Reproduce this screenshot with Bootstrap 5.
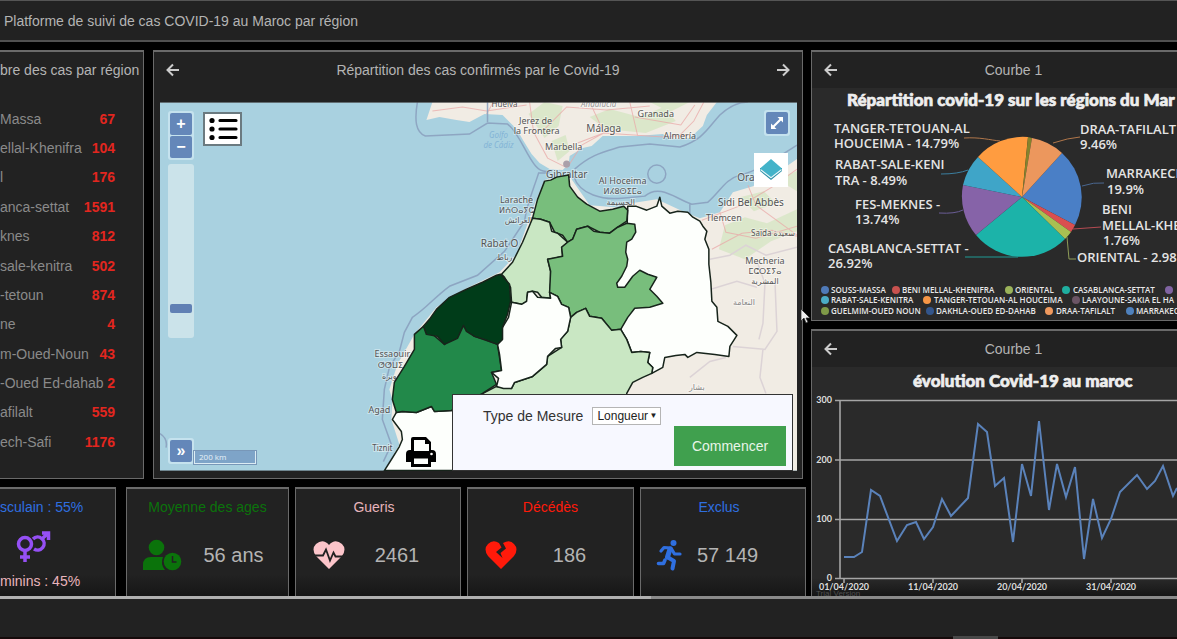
<!DOCTYPE html>
<html lang="fr">
<head>
<meta charset="utf-8">
<meta name="viewport" content="width=device-width, initial-scale=1">
<title>Platforme de suivi de cas COVID-19 au Maroc</title>
<link href="https://cdn.jsdelivr.net/npm/bootstrap@5.3.0/dist/css/bootstrap.min.css" rel="stylesheet">
<style>
  body{background:#000;color:#b4b4b4;font-family:"Liberation Sans",Arial,sans-serif;font-size:14px;line-height:20px;overflow:hidden}
  .topbar{background:#222;border-top:1px solid #555;border-bottom:2px solid #505050;height:42px}
  .board{display:grid;grid-template-columns:806fr 366fr;column-gap:5px}
  .board-top{display:grid;grid-template-columns:144fr 650fr;column-gap:9px;padding-right:3px}
  .stats{display:grid;grid-template-columns:120fr 163fr 166fr 167fr 166fr;column-gap:6px}
  .panel{background:#222;border:1px solid #6a6a6a;border-top-width:2px;min-width:0}
  .panel.edge-l{border-left:0}
  .panel.edge-r{border-right:0}
  .panel-head{height:36px}
  .tall-head{height:50px;padding-bottom:14px}
  .arrow{background:none;border:0;padding:0;width:14px;height:14px;line-height:0;color:#ccc}
  .region-list{padding:16px 28px 21px 0}
  .region-list li{flex:1;color:#8a8a8a}
  .region-list strong{color:#e3261f}
  .map-wrap{padding:0 5px 7px 6px}
  .map-wrap svg.carte,.plot{display:block;width:100%;height:auto}
  .ctl{width:22px;height:22px;background:#6487b9;color:#fff;border:0;border-radius:2px;padding:0;font-weight:700;line-height:20px;font-size:16px;display:flex;align-items:center;justify-content:center}
  .halo{background:rgba(220,240,250,.55);padding:2px;border-radius:3px}
  .zoom-pair{row-gap:1px}
  .ctl-left{left:8px;top:9px}
  .legend-btn{left:43px;top:10px;width:39px;height:34px;background:#fff;border:2px solid #6b7a80;padding:0;line-height:0}
  .zoom-track{width:26px;height:174px;background:rgba(225,238,240,.62);border-radius:3px;position:relative}
  .zoom-track input{appearance:none;-webkit-appearance:none;background:none;width:174px;height:26px;margin:0;position:absolute;left:-74px;top:74px;transform:rotate(-90deg)}
  .zoom-track input::-webkit-slider-thumb{-webkit-appearance:none;width:9px;height:22px;background:#6080b4;border-radius:2px}
  .ctl-low{left:8px;bottom:7px}
  .scale-bar{background:#7ea4c8;border:1px solid #dcecf4;border-top:0;outline:1px solid #7897b8;color:#e6f2f8;font:8px/12px "Open Sans",sans-serif;width:62px;height:13px;padding-left:4px}
  .ctl-full{right:7px;top:8px}
  .ctl-layers{right:9px;top:51px;width:34px;height:34px;background:#fff;border:0;padding:0;line-height:0}
  .measure{right:4px;bottom:0;width:341px;height:77px;background:#f7f8ff;border:1px solid #333;color:#333;padding:0 6px 4px 30px}
  .measure-row{padding-top:11px;gap:9px}
  .measure select{font-size:12px;line-height:14px;height:18px;width:69px;border:1px solid #b5b5b5;background:#fff;color:#222;padding:0 4px;appearance:none;-webkit-appearance:none}
  .caret{right:4px;top:0;font-size:8px;line-height:18px;pointer-events:none;color:#222}
  .go{width:112px;height:41px;background:#40a04e;color:#e8f5e8;border:0}
  .printer{left:245px;bottom:3px;width:32px;height:32px;background:none;border:0;padding:0;line-height:0}
  .stat{height:109px;background:linear-gradient(#222 0 80%,#161616);border-bottom:0;padding-top:8px}
  .stat-row{margin-top:16px}
  .stat .ico{width:66px;text-align:center;line-height:0}
  .stat .ico.slim{width:56px}
  .stat .val{font-size:20px;line-height:36px;padding-right:28px}
  .stat .val.wide{padding-right:14px}
  .pair{padding:12px 0 4px 16px}
  .c-blue{color:#2f6fe0}.c-pink{color:#e8b4bc}.c-green{color:#0b730b}.c-red{color:#ff1a0a}
  .player{background:#222;border-top:3px solid #8a8a8a;flex:1;border-bottom:2px solid #150a0a;position:relative;z-index:2;min-height:43px}
  .progress-done{position:absolute;left:0;top:-3px;height:3px;width:55.3%;background:#b0b0b0}
  .grip{position:absolute;left:81%;bottom:-2px;width:45px;height:3px;background:#484848}
  .pointer{left:68%;top:266px;z-index:5}
  .plot{background:#2a2a2a}
  .ttl{font:900 17px Lato,"Liberation Sans",sans-serif;fill:#eee;stroke:#eee;stroke-width:.7px}
  .lbl{font:600 13px "Open Sans",sans-serif;fill:#e4e4e4}
  .leg{font:600 8px "Open Sans",sans-serif;fill:#e8e8e8}
  .ax{font:bold 9px Lato,"Liberation Sans",sans-serif;fill:#ddd}
  .town{font-family:"Noto Sans","DejaVu Sans",sans-serif;fill:#555;paint-order:stroke;stroke:#fff;stroke-opacity:.4;stroke-width:2px}
</style>
</head>
<body class="d-flex flex-column min-vh-100">
<header class="topbar d-flex align-items-center px-1"><span>Platforme de suivi de cas COVID-19 au Maroc par région</span></header>

<main class="board pt-2 position-relative">
  <div class="d-flex flex-column gap-2">
    <div class="board-top">
      <section class="panel edge-l d-flex flex-column">
        <div class="panel-head d-flex align-items-center text-nowrap">bre des cas par région</div>
        <ul class="region-list list-unstyled d-flex flex-column flex-grow-1 mb-0 text-nowrap">
          <li class="d-flex justify-content-between align-items-center"><span>Massa</span><strong>67</strong></li>
          <li class="d-flex justify-content-between align-items-center"><span>ellal-Khenifra</span><strong>104</strong></li>
          <li class="d-flex justify-content-between align-items-center"><span>l</span><strong>176</strong></li>
          <li class="d-flex justify-content-between align-items-center"><span>anca-settat</span><strong>1591</strong></li>
          <li class="d-flex justify-content-between align-items-center"><span>knes</span><strong>812</strong></li>
          <li class="d-flex justify-content-between align-items-center"><span>sale-kenitra</span><strong>502</strong></li>
          <li class="d-flex justify-content-between align-items-center"><span>-tetoun</span><strong>874</strong></li>
          <li class="d-flex justify-content-between align-items-center"><span>ne</span><strong>4</strong></li>
          <li class="d-flex justify-content-between align-items-center"><span>m-Oued-Noun</span><strong>43</strong></li>
          <li class="d-flex justify-content-between align-items-center"><span>-Oued Ed-dahab</span><strong>2</strong></li>
          <li class="d-flex justify-content-between align-items-center"><span>afilalt</span><strong>559</strong></li>
          <li class="d-flex justify-content-between align-items-center"><span>ech-Safi</span><strong>1176</strong></li>
        </ul>
      </section>

      <section class="panel">
        <div class="panel-head tall-head d-flex align-items-center justify-content-between px-2 mx-1">
          <button class="arrow" aria-label="Précédent"><svg width="14" height="14" viewBox="0 0 14 14" fill="none" stroke="currentColor" stroke-width="2"><path d="M13 7H2M7 1.500L1.500 7 7 12.500"/></svg></button>
          <span>Répartition des cas confirmés par le Covid-19</span>
          <button class="arrow" aria-label="Suivant"><svg width="14" height="14" viewBox="0 0 14 14" fill="none" stroke="currentColor" stroke-width="2"><path d="M1 7H12M7 1.500L12.500 7 7 12.500"/></svg></button>
        </div>
        <div class="map-wrap">
          <div class="position-relative overflow-hidden">
            <svg class="carte" viewBox="161 103 636 368" role="img" aria-label="Carte du Maroc">
              <rect x="161" y="103" width="636" height="368" fill="#a9d1e0"/>
              <g fill="#f1ece4">
                <path d="M433 103L427 121 440 118 457 121 470 123 485 115 503 116 517 130 524 142 532 155 540 164 550 170 563 171 569 165 570 157 583 149 592 147 603 137 637 137 663 135 672 140 690 139 703 127 707 116 717 103Z"/>
                <path d="M625 205L657 200 685 213 700 219 720 213 733 193 753 187 770 177 787 167 797 160V471H600V380L640 300Z"/>
                <path d="M393 400L390 390 398 365 415 335 437 308 467 289 500 273 517 255 535 205 545 181 569 176 590 206 628 209 640 212V471H385L400 445 392 420Z"/>
              </g>
              <g fill="#d3e5c0" opacity=".7">
                <path d="M545 103l18 4-4 20-14 12-16-24z M590 118l20-8 30 8 24-10 12 14-30 12-40-4z M552 142l14-6 4 16-12 10z M650 103l40 0-20 10z"/>
                <path d="M725 226l20-8 22 6 30-14v22l-26 10-26 18-26-10z M740 198l24-6 12 12-22 8z M777 180l20-8v20z"/>
              </g>
              <g fill="none" stroke="#eaa9a8" stroke-width="1" opacity=".75">
                <path d="M433 112l30-4 24 4 40-6M530 103l4 30 14 26 20 10M568 168l14-22 22-12 60 4 26-2M590 103l14 30M604 134l-26 10M630 103l8 34M680 136l14-14 10-19M635 118l46 8 14-20M494 103l-7 12M545 130l22-22 40 3 43-4"/>
                <path d="M702 221l40-15 30-18 25-18M748 186l8 20 41 30M720 213l6 20 30 6 41-12M712 250l30-16 30-3 25 6"/>
              </g>
              <g fill="none" stroke="#dcd3d6" stroke-width="1.500">
                <path d="M710 260l20-4 16-10 20 10 31-8M711 290l26-8 20 6M757 262l8 22-2 40-4 16M775 282l2 50-12 18-32-3M763 350l-3 28 6 16M690 378l20-16 16-4"/>
              </g>
              <g fill="none" stroke="#8ba1bf" stroke-width="1.500" opacity=".9">
                <path d="M418 103C415 121 416 133 426 137L470 135 488 124 508 125C519 133 526 155 536 167Q542 174 550 172M488 103v20M550 174l-11 0C534 190 527 205 525 222L505 252 478 276 450 287C436 297 427 309 413 318L405 333 400 352 390 368 385 390 383 420 392 445 384 462"/>
                <path d="M575 170C592 155 604 153 620 148L650 145 680 148C704 140 707 130 720 116Q734 103 748 103M574 177C580 196 604 201 622 199L645 197C660 184 676 200 692 205L708 203C720 193 725 180 740 176Q756 172 775 160L797 146M690 205v12"/>
                <circle cx="657" cy="175" r="9"/>
                <path d="M161 434q8 5 6 14M386 470q8-16 14-20"/>
              </g>
              <circle cx="567" cy="165" r="3.500" fill="#aaa0aa"/>
              <g class="town" text-anchor="middle">
                <text x="505" y="108" font-size="8">Huelva</text><text x="599" y="108" font-size="8" font-style="italic" fill="#999">Andalucía</text>
                <text x="656" y="118" font-size="9">Granada</text><text x="536" y="125" font-size="9">Jerez de</text><text x="537" y="135" font-size="9">la Frontera</text>
                <text x="604" y="133" font-size="10">Málaga</text><text x="680" y="140" font-size="9">Almería</text><text x="564" y="151" font-size="9">Marbella</text>
                <text x="567" y="179" font-size="10">Gibraltar</text><text x="623" y="185" font-size="9">Al Hoceima</text><text x="623" y="195" font-size="8">ⵍⵃⵓⵙⵉⵎⴰ</text><text x="621" y="206" font-size="8">الحسيمة</text>
                <text x="517" y="204" font-size="9">Larache</text><text x="517" y="214" font-size="8">ⵍⵄⵔⴰⵢⵛ</text><text x="519" y="224" font-size="8">العرائش</text>
                <text x="500" y="248" font-size="10">Rabat O</text><text x="505" y="261" font-size="8">رباط</text>
                <text x="746" y="182" font-size="10">Ora</text><text x="751" y="207" font-size="10">Sidi Bel Abbès</text><text x="724" y="222" font-size="9">Tlemcen</text><text x="773" y="237" font-size="8">Saïda سعيدة</text>
                <text x="765" y="265" font-size="9">Mecheria</text><text x="765" y="275" font-size="8">ⵎⵛⵔⵉⵢⴰ</text><text x="765" y="285" font-size="8">المشرية</text>
                <text x="744" y="306" font-size="8" fill="#888">النعامة</text><text x="697" y="391" font-size="8" fill="#888">بشار</text>
                <text x="393" y="358" font-size="9">Essaouir</text><text x="391" y="369" font-size="8">ⵚⵚⵡⵉ</text><text x="390" y="380" font-size="8">ويرة</text>
                <text x="380" y="414" font-size="9">Agad</text><text x="383" y="451" font-size="8">Tiznit</text>
              </g>
              <g font-family="Noto Sans, sans-serif" font-size="8" font-style="italic" fill="#83b4d6" text-anchor="middle"><text x="499" y="139">Golfo</text><text x="499" y="149">de Cádiz</text></g>
              <g stroke="#17241b" stroke-width="1.500" stroke-linejoin="round">
                <path fill="#fdfffc" d="M397 413L393 420 402 432 403 440 400 447 392 460 385 471H520V405L452 411 435 412 432 407 417 413 403 412Z"/>
                <path fill="#fdfffc" d="M628 207L636 207 647 211 657 207 660 198 662 207 670 214 678 212 688 213 693 218 700 222 703 227 707 232 705 240 709 250 709 265 711 283 712 302 717 308 718 322 728 327 737 336 730 347 729 357 715 355 697 353 688 358 685 355 676 356 665 358 663 368 652 374 653 368 648 363 650 353 641 352 632 353 627 340 621 330 600 300 617 283 627 240Z"/>
                <path fill="#78be7c" d="M533 219L538 200 545 182 551 181 557 178 569 176 570 187 578 198 587 205 600 212 613 210 624 207 628 211 627 222 618 228 610 234 600 233 588 227 577 230 573 240 568 243 563 236 555 233 550 223 541 220Z"/>
                <path fill="#c9e7c3" d="M533 219L541 220 550 223 552 232 558 234 568 243 562 248 563 257 555 259 548 260 551 272 551 283 550 293 551 299 542 298 538 293 533 292 528 293 527 302 522 305 512 303 511 288 505 278 502 275 513 263 523 243Z"/>
                <path fill="#78be7c" d="M568 243L573 240 577 230 588 227 594 232 600 233 610 234 618 228 627 224 635 225 636 233 632 240 627 243 626 253 628 260 627 267 622 277 617 284 618 288 625 288 633 277 640 271 648 275 657 278 650 290 657 297 663 304 650 308 635 309 628 318 621 330 612 331 602 319 590 317 586 309 577 313 571 318 569 308 562 305 558 297 550 293 551 272 548 260 563 257 562 248Z"/>
                <path fill="#c9e7c3" d="M571 318L577 313 586 309 590 317 602 319 612 331 621 330 627 340 632 353 641 352 650 353 648 363 653 368 652 374 643 378 633 383 627 394V420H470L483 394 497 387 512 389 515 383 533 377 547 365 548 357 562 348 561 340 568 332Z"/>
                <path fill="#22894a" d="M424 327L415 335 415 350 405 367 395 383 393 400 397 413 403 412 417 413 432 407 435 412 452 411 483 394 497 385 492 373 502 371 498 345 475 337 464 326 445 345Z"/>
                <path fill="#fdfffc" d="M512 303L522 305 527 302 528 293 533 292 538 298 551 299 550 293 558 297 562 305 569 308 571 318 568 332 561 340 562 348 556 349 548 357 547 365 533 377 515 383 512 389 504 389 497 387 499 379 492 373 502 371 500 355 498 345 503 328 509 318Z"/>
                <path fill="#003c19" d="M501 275L497 276 483 283 467 290 450 298 437 310 430 320 424 327 427 335 438 337 445 345 458 339 464 326 467 332 475 337 485 340 498 345 503 340 503 328 508 315 511 302 510 285 504 278Z"/>
              </g>
              <path fill="none" stroke="#444" opacity=".7" d="M161 103.500H797"/>
            </svg>

            <div class="ctl-left position-absolute d-flex flex-column">
              <div class="halo zoom-pair d-flex flex-column mb-1">
                <button class="ctl" aria-label="Zoom avant">+</button>
                <button class="ctl" aria-label="Zoom arrière">−</button>
              </div>
              <div class="zoom-track"><input type="range" min="0" max="100" value="15" aria-label="Niveau de zoom"></div>
            </div>
            <button class="legend-btn position-absolute" aria-label="Légende"><svg width="30" height="24" viewBox="0 0 30 24"><g fill="#000"><circle cx="4" cy="3.500" r="2.600"/><circle cx="4" cy="12" r="2.600"/><circle cx="4" cy="20.500" r="2.600"/></g><path stroke="#000" stroke-width="3.200" stroke-linecap="round" d="M12 3.500H28M12 12H28M12 20.500H28"/></svg></button>
            <div class="halo ctl-full position-absolute"><button class="ctl" aria-label="Plein écran"><svg width="14" height="14" viewBox="0 0 14 14"><path fill="#fff" d="M7.500 1H13v5.500L11 4.500 4.500 11 6.500 13H1V7.500L3 9.500 9.500 3z"/></svg></button></div>
            <button class="ctl-layers position-absolute" aria-label="Couches"><svg width="26" height="26" viewBox="0 0 26 26"><path fill="#2a8fa5" d="M2 14L13 23 24 14V11H2z"/><path fill="#e8f7fa" d="M2 13L13 21.500 24 13 22 11H4z"/><path fill="#43b3c9" d="M13 2L24 11.500 13 20 2 11.500z"/></svg></button>
            <div class="ctl-low position-absolute d-flex align-items-end">
              <div class="halo"><button class="ctl" aria-label="Vue générale">»</button></div>
              <div class="scale-bar">200 km</div>
            </div>
            <button class="printer position-absolute" aria-label="Imprimer"><svg width="32" height="32" viewBox="0 0 32 32"><path fill="#000" d="M8 1h13l5 5v8h1q4 0 4 4v8h-5v5H6v-5H1v-8q0-4 4-4h1V3q0-2 2-2z"/><path fill="#fdfffc" d="M9 4h11v4h4v7H9zM9 22.500h14V28H9z"/><circle cx="26.500" cy="18" r="1.300" fill="#fff"/></svg></button>
            <form class="measure position-absolute d-flex flex-column justify-content-between">
              <div class="measure-row d-flex align-items-center">
                <label for="mesure">Type de Mesure</label>
                <span class="position-relative d-flex"><select id="mesure"><option>Longueur</option><option>Surface</option></select><span class="caret position-absolute">▼</span></span>
              </div>
              <button type="button" class="go align-self-end">Commencer</button>
            </form>
          </div>
        </div>
      </section>
    </div>

    <div class="stats">
      <section class="panel edge-l stat me-1 text-nowrap">
        <div class="c-blue">sculain : 55%</div>
        <div class="pair"><svg class="d-block" width="36" height="38" viewBox="0 -2 36 38" fill="none" stroke="#9550f5" stroke-width="3.500"><circle cx="9" cy="13" r="6.500"/><path d="M9 20v11M4 26h10M17 8a6.500 6.500 0 1 1 1 10M26 8L31 3M26 2h6.500V9"/></svg></div>
        <div class="c-pink">minins : 45%</div>
      </section>
      <section class="panel stat">
        <div class="c-green text-center">Moyenne des ages</div>
        <div class="stat-row d-flex align-items-center pt-1"><div class="ico ps-1"><svg width="40" height="32" viewBox="0 0 40 32"><g fill="#0b730b"><circle cx="14.500" cy="8.500" r="7.800"/><path d="M1 31V26q0-8 8-8h12q-3 7 2 13z"/><circle cx="30.500" cy="22.500" r="8.800"/></g><path d="M30.500 17v6h4" fill="none" stroke="#222" stroke-width="1.500"/></svg></div><div class="val wide flex-grow-1 text-center">56 ans</div></div>
      </section>
      <section class="panel stat">
        <div class="text-center pe-2"><span class="c-pink">Gueris</span></div>
        <div class="stat-row d-flex align-items-center pt-1"><div class="ico"><svg width="32" height="30" viewBox="0 0 32 30"><path fill="#fcc5ca" d="M16 29L3 16Q-2 9 3 4 10-2 16 5 22-2 29 4 34 9 29 16z"/><path fill="none" stroke="#222" stroke-width="1.800" d="M1 15.500h9l3-6 4 11 3.500-8 2 4H31"/></svg></div><div class="val flex-grow-1 text-center">2461</div></div>
      </section>
      <section class="panel stat">
        <div class="c-red text-center">Décédès</div>
        <div class="stat-row d-flex align-items-center pt-1"><div class="ico"><svg width="32" height="30" viewBox="0 0 32 30"><path fill="#ff1a0a" d="M16 29L3 16Q-2 9 3 4 8-1 14 3L16.500 7.500 11 12 17.500 18 15.500 13 21 8.500 18 3Q25-1 29 4 34 9 29 16z"/></svg></div><div class="val flex-grow-1 text-center">186</div></div>
      </section>
      <section class="panel stat">
        <div class="c-blue text-center pe-2">Exclus</div>
        <div class="stat-row d-flex align-items-center pt-1"><div class="ico slim"><svg width="27" height="32" viewBox="0 0 27 32" fill="none" stroke="#2f6fe0" stroke-width="4" stroke-linecap="round" stroke-linejoin="round"><circle cx="17.500" cy="4" r="3" fill="#2f6fe0" stroke="none"/><path stroke-width="3.200" d="M5 12L8 8.500 15 9 18.500 15H24"/><path stroke-width="5" d="M14 10L11.500 18"/><path d="M12 18.500L18 22 16.500 29.500"/><path stroke-width="3.600" d="M9 21L7.500 24.500H2.500"/></svg></div><div class="val flex-grow-1">57 149</div></div>
      </section>
    </div>
  </div>

  <div class="d-flex flex-column gap-2">
    <section class="panel edge-r">
      <div class="panel-head d-flex align-items-center px-2 ms-1">
        <button class="arrow" aria-label="Précédent"><svg width="14" height="14" viewBox="0 0 14 14" fill="none" stroke="currentColor" stroke-width="2"><path d="M13 7H2M7 1.500L1.500 7 7 12.500"/></svg></button>
        <span class="flex-grow-1 text-center ps-3 ms-1">Courbe 1</span>
      </div>
      <svg class="plot" viewBox="812 88 365 232" role="img" aria-label="Répartition par région">
        <text class="ttl" x="847" y="106">Répartition covid-19 sur les régions du Mar</text>
        <path fill="#4a7fc6" d="M1022 197L1062 153A60 60 0 0 1 1075 225Z"/>
        <path fill="#d94f50" d="M1022 197L1075 225A60 60 0 0 1 1071 232Z"/>
        <path fill="#a9bf52" d="M1022 197L1071 232A60 60 0 0 1 1065 239Z"/>
        <path fill="#1cb3a9" d="M1022 197L1065 239A60 60 0 0 1 976 235Z"/>
        <path fill="#8663a8" d="M1022 197L976 235A60 60 0 0 1 963 185Z"/>
        <path fill="#3fa5c8" d="M1022 197L963 185A60 60 0 0 1 978 157Z"/>
        <path fill="#ff9c40" d="M1022 197L978 157A60 60 0 0 1 1028 137Z"/>
        <path fill="#85832c" d="M1022 197L1028 137A60 60 0 0 1 1032 138Z"/>
        <path fill="#ec975d" d="M1022 197L1032 138A60 60 0 0 1 1062 153Z"/>
        <g fill="none">
          <path stroke="#b0764a" d="M964 138C980 137 990 140 1000 141M1053 143Q1068 138 1080 137"/>
          <path stroke="#3b7fa0" d="M941 174Q958 174 968 170"/><path stroke="#6a5d96" d="M939 213Q955 214 963 210"/>
          <path stroke="#1e9a94" d="M965 257H1018"/><path stroke="#4a6790" d="M1082 186Q1094 182 1104 183"/>
          <path stroke="#b54b52" d="M1073 229L1101 227"/><path stroke="#8f9c58" d="M1067 237L1069 259H1076"/>
        </g>
        <g class="lbl">
          <text x="834" y="133">TANGER-TETOUAN-AL</text><text x="834" y="148">HOUCEIMA - 14.79%</text>
          <text x="835" y="169">RABAT-SALE-KENI</text><text x="835" y="185">TRA - 8.49%</text>
          <text x="855" y="209">FES-MEKNES -</text><text x="855" y="224">13.74%</text>
          <text x="828" y="253">CASABLANCA-SETTAT -</text><text x="828" y="268">26.92%</text>
          <text x="1080" y="134">DRAA-TAFILALT</text><text x="1080" y="149">9.46%</text>
          <text x="1106" y="178">MARRAKECH</text><text x="1107" y="194">19.9%</text>
          <text x="1102" y="214">BENI</text><text x="1102" y="230">MELLAL-KHE</text><text x="1103" y="245">1.76%</text>
          <text x="1077" y="262">ORIENTAL - 2.98</text>
        </g>
        <g>
          <circle cx="825" cy="290" r="4" fill="#4f7ab8"/><circle cx="896" cy="290" r="4" fill="#c8524f"/><circle cx="1009" cy="290" r="4" fill="#9bb35a"/><circle cx="1066" cy="290" r="4" fill="#1fae9f"/><circle cx="1169" cy="290" r="4" fill="#8064a2"/>
          <circle cx="825" cy="300" r="4" fill="#4bacc6"/><circle cx="927" cy="300" r="4" fill="#f79646"/><circle cx="1076" cy="300" r="4" fill="#6b5565"/>
          <circle cx="825" cy="311" r="4" fill="#7f9a48"/><circle cx="930" cy="311" r="4" fill="#33558b"/><circle cx="1049" cy="311" r="4" fill="#f0995e"/><circle cx="1130" cy="311" r="4" fill="#4f81bd"/>
        </g>
        <g class="leg">
          <text x="831" y="293">SOUSS-MASSA</text><text x="902" y="293">BENI MELLAL-KHENIFRA</text><text x="1015" y="293">ORIENTAL</text><text x="1073" y="293">CASABLANCA-SETTAT</text>
          <text x="831" y="303">RABAT-SALE-KENITRA</text><text x="934" y="303">TANGER-TETOUAN-AL HOUCEIMA</text><text x="1082" y="303">LAAYOUNE-SAKIA EL HA</text>
          <text x="831" y="314">GUELMIM-OUED NOUN</text><text x="936" y="314">DAKHLA-OUED ED-DAHAB</text><text x="1056" y="314">DRAA-TAFILALT</text><text x="1136" y="314">MARRAKEC</text>
        </g>
      </svg>
    </section>

    <section class="panel edge-r flex-grow-1 border-bottom-0">
      <div class="panel-head d-flex align-items-center px-2 ms-1">
        <button class="arrow" aria-label="Précédent"><svg width="14" height="14" viewBox="0 0 14 14" fill="none" stroke="currentColor" stroke-width="2"><path d="M13 7H2M7 1.500L1.500 7 7 12.500"/></svg></button>
        <span class="flex-grow-1 text-center ps-3 ms-1">Courbe 1</span>
      </div>
      <svg class="plot" viewBox="812 367 365 229" role="img" aria-label="Évolution Covid-19">
        <defs><linearGradient id="fade" x1="0" y1="0" x2="0" y2="1"><stop offset="0" stop-color="#2a2a2a"/><stop offset="1" stop-color="#161616"/></linearGradient></defs>
        <rect x="812" y="578" width="365" height="18" fill="url(#fade)"/>
        <text class="ttl" x="913" y="387">évolution Covid-19 au maroc</text>
        <path fill="none" stroke="#a5a5a5" stroke-width="1.600" d="M835 400.500H1177M835 460H1177M835 519.500H1177M835 578.500H1177M840 400V579M844 579v4M933 579v4M1022 579v4M1111 579v4"/>
        <path fill="none" stroke="#5a82ba" stroke-width="2" d="M844 557L854 557 862 552 871 490 880 496 897 541 907 525 916 522 924 539 933 527 942 499 951 516 968 498 978 424 987 432 995 486 1004 478 1013 542 1022 464 1031 496 1039 421 1049 510 1057 464 1066 497 1075 467 1084 559 1093 499 1102 538 1111 519 1120 492 1137 475 1147 489 1155 481 1163 466 1173 496 1177 488"/>
        <g class="ax"><g text-anchor="end"><text x="832" y="403">300</text><text x="832" y="463">200</text><text x="832" y="522">100</text><text x="832" y="581">0</text></g>
        <g text-anchor="middle"><text x="844" y="590">01/04/2020</text><text x="933" y="590">11/04/2020</text><text x="1022" y="590">20/04/2020</text><text x="1111" y="590">31/04/2020</text></g></g>
        <text x="816" y="596" font-size="8" fill="#505050">Trial Version</text>
      </svg>
    </section>
  </div>
  <svg class="pointer position-absolute" width="12" height="16" viewBox="0 0 12 16"><path d="M1 1v12l3-3 2 5 2-1-2-4h4z" fill="#eee" stroke="#222" stroke-width=".7"/></svg>
</main>
<footer class="player"><div class="progress-done"></div><div class="grip"></div></footer>
<script src="https://cdn.jsdelivr.net/npm/bootstrap@5.3.0/dist/js/bootstrap.bundle.min.js"></script>
</body>
</html>
